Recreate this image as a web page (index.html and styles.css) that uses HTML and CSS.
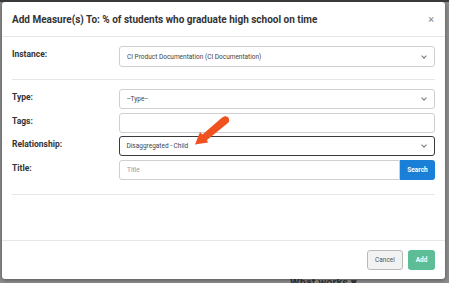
FILE: index.html
```html
<!DOCTYPE html>
<html lang="en">
<head>
    <meta charset="UTF-8">
    <title>Add Measure(s)</title>
    <link rel="stylesheet" href="styles.css">
</head>
<body>
<div class="screen">
    <div class="behind">What works &#9662;</div>

    <div class="modal">
        <div class="modal-header">
            <h1>Add Measure(s) To: % of students who graduate high school on time</h1>
            <span class="close">&times;</span>
        </div>

        <div class="modal-body">
            <div class="row">
                <label>Instance:</label>
                <div class="select">CI Product Documentation (CI Documentation)<span class="chev"></span></div>
            </div>

            <div class="divider"></div>

            <div class="rows">
                <div class="row">
                    <label>Type:</label>
                    <div class="select">--Type--<span class="chev"></span></div>
                </div>
                <div class="row">
                    <label>Tags:</label>
                    <div class="select"></div>
                </div>
                <div class="row">
                    <label>Relationship:</label>
                    <div class="select active">Disaggregated - Child<span class="chev"></span></div>
                </div>
                <div class="row">
                    <label>Title:</label>
                    <div class="search-group">
                        <div class="select placeholder">Title</div>
                        <button class="btn-search">Search</button>
                    </div>
                </div>
            </div>

            <div class="divider bottom"></div>
        </div>

        <div class="modal-footer">
            <button class="btn-cancel">Cancel</button>
            <button class="btn-add">Add</button>
        </div>
    </div>

    <!-- callout arrow -->
    <svg class="arrow" width="449" height="283" viewBox="0 0 449 283">
        <path d="M224 116.5 C228 115.5 230.5 119.5 228.5 122.5 L207 140 L208 142.5 L195 144.5 L200 132 L202.5 134.5 L221.5 118 Z" fill="#f0521f"/>
    </svg>
</div>
</body>
</html>
```

FILE: styles.css
```css
body {
    margin: 0;
    padding: 0;
    overflow: hidden;
    font-family: Roboto, "Liberation Sans", sans-serif;
}
.screen {
    position: relative;
    width: 449px;
    height: 283px;
    background: #8c8c8c;
    border-top: 2px solid #3a3a3a;
    box-sizing: border-box;
    overflow: hidden;
}
.behind {
    position: absolute;
    left: 290px;
    top: 274px;
    font-size: 11px;
    font-weight: bold;
    color: #333;
}
.modal {
    position: relative;
    margin-left: 2px;
    width: 443px;
    height: 277px;
    background: #fff;
    border-radius: 3px;
    box-shadow: 0 1px 4px rgba(0, 0, 0, 0.4);
    display: flex;
    flex-direction: column;
}
.modal-header {
    height: 34px;
    display: flex;
    align-items: center;
    justify-content: space-between;
    padding: 0 11px 0 10px;
    border-bottom: 1px solid #e6e6e6;
}
.modal-header h1 {
    margin: 0;
    font-size: 10px;
    font-weight: bold;
    color: #333;
}
.close {
    font-size: 11px;
    color: #8a8a8a;
    line-height: 1;
}
.modal-body {
    flex: 1;
    padding: 9px 10px 0 10px;
}
.rows {
    display: flex;
    flex-direction: column;
    gap: 3.5px;
}
.row {
    display: flex;
    align-items: flex-start;
}
.row label {
    width: 107px;
    flex-shrink: 0;
    font-size: 8.5px;
    font-weight: bold;
    color: #333;
    padding-top: 3px;
}
.select {
    flex: 1;
    position: relative;
    height: 20px;
    box-sizing: border-box;
    border: 1px solid #cfcfcf;
    border-radius: 3px;
    padding-left: 7px;
    display: flex;
    align-items: center;
    font-size: 6.5px;
    color: #444;
}
.modal-body > .row .select {
    height: 21px;
}
.select.active {
    border: 1.5px solid #3b3b3b;
    padding-left: 6.5px;
}
.select.placeholder {
    color: #999;
    border-radius: 3px 0 0 3px;
}
.chev {
    position: absolute;
    right: 8px;
    top: 50%;
    width: 3px;
    height: 3px;
    margin-top: -3px;
    border-right: 1px solid #777;
    border-bottom: 1px solid #777;
    transform: rotate(45deg);
}
.divider {
    height: 1px;
    background: #e6e6e6;
    margin: 12px 0 9px;
}
.divider.bottom {
    margin: 14px 0 0;
}
.search-group {
    flex: 1;
    display: flex;
}
.btn-search {
    width: 35px;
    height: 20px;
    border: none;
    border-radius: 0 3px 3px 0;
    background: #1a7fd6;
    color: #fff;
    font-family: inherit;
    font-size: 6.5px;
    font-weight: bold;
    padding: 0;
}
.modal-footer {
    height: 39px;
    border-top: 1px solid #e6e6e6;
    display: flex;
    justify-content: flex-end;
    align-items: flex-start;
    gap: 5px;
    padding: 9px 10px 0 0;
    box-sizing: border-box;
}
.modal-footer button {
    height: 20px;
    border-radius: 3px;
    font-family: inherit;
    font-size: 6.5px;
    padding: 0;
}
.btn-cancel {
    width: 36px;
    background: #f2f2f2;
    border: 1px solid #b9b9b9;
    color: #555;
}
.btn-add {
    width: 27px;
    background: #5dbd97;
    border: none;
    color: #fff;
    font-weight: bold;
}
.arrow {
    position: absolute;
    left: 0;
    top: -2px;
    pointer-events: none;
}
```
